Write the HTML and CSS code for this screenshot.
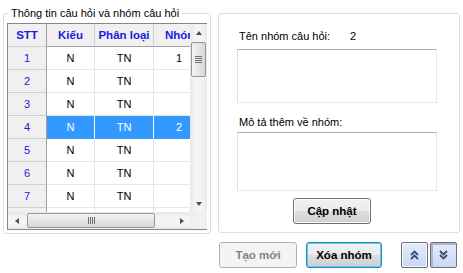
FILE: index.html
```html
<!DOCTYPE html>
<html>
    <head>
        <meta charset="utf-8">
        <link rel="stylesheet" href="styles.css">
    </head>
    <body>
        <div class="window">
            <fieldset class="group group-list">
                <legend>Thông tin câu hỏi và nhóm câu hỏi</legend>
                <div class="grid">
                    <div class="grid-view">
                        <table class="questions">
                            <tr>
                                <th class="rowhead">STT</th>
                                <th>Kiểu</th>
                                <th>Phân loại</th>
                                <th class="group-col">Nhóm</th>
                            </tr>
                            <tr>
                                <td class="rowhead">1</td><td>N</td><td>TN</td><td class="num">1</td>
                            </tr>
                            <tr>
                                <td class="rowhead">2</td><td>N</td><td>TN</td><td class="num"></td>
                            </tr>
                            <tr>
                                <td class="rowhead">3</td><td>N</td><td>TN</td><td class="num"></td>
                            </tr>
                            <tr class="selected">
                                <td class="rowhead">4</td><td>N</td><td>TN</td><td class="num">2</td>
                            </tr>
                            <tr>
                                <td class="rowhead">5</td><td>N</td><td>TN</td><td class="num"></td>
                            </tr>
                            <tr>
                                <td class="rowhead">6</td><td>N</td><td>TN</td><td class="num"></td>
                            </tr>
                            <tr>
                                <td class="rowhead">7</td><td>N</td><td>TN</td><td class="num"></td>
                            </tr>
                            <!--next row, only its top edge shows-->
                            <tr>
                                <td class="rowhead"></td><td></td><td></td><td class="num"></td>
                            </tr>
                        </table>
                    </div>
                    <!--vertical scrollbar-->
                    <div class="vscroll">
                        <div class="arrow"><span class="tri tri-up"></span></div>
                        <div class="track">
                            <div class="thumb thumb-v"><span class="grip grip-v"></span></div>
                        </div>
                        <div class="arrow"><span class="tri tri-down"></span></div>
                    </div>
                    <!--horizontal scrollbar-->
                    <div class="hscroll">
                        <div class="arrow"><span class="tri tri-left"></span></div>
                        <div class="track">
                            <div class="thumb thumb-h"><span class="grip grip-h"></span></div>
                        </div>
                        <div class="arrow"><span class="tri tri-right"></span></div>
                    </div>
                    <div class="corner"></div>
                </div>
            </fieldset>

            <fieldset class="group group-edit">
                <div class="field-label name-label">
                    <span class="label-text">Tên nhóm câu hỏi:</span>
                    <span class="label-value">2</span>
                </div>
                <div class="textbox textbox-name"></div>
                <div class="field-label desc-label">Mô tả thêm về nhóm:</div>
                <div class="textbox textbox-desc"></div>
                <button class="btn btn-update">Cập nhật</button>
            </fieldset>

            <div class="actions">
                <button class="btn btn-new" disabled>Tạo mới</button>
                <button class="btn btn-delete">Xóa nhóm</button>
                <div class="move">
                    <button class="btn-move">
                        <svg width="9" height="10" viewBox="0 0 9 10"><polyline points="1,5 4.5,1.5 8,5" /><polyline points="1,9 4.5,5.5 8,9" /></svg>
                    </button>
                    <button class="btn-move btn-move-down">
                        <svg width="9" height="10" viewBox="0 0 9 10"><polyline points="1,1 4.5,4.5 8,1" /><polyline points="1,5 4.5,8.5 8,5" /></svg>
                    </button>
                </div>
            </div>
        </div>
    </body>
</html>
```

FILE: styles.css
```css
body {
    margin: 0px;
    background-color: #ffffff;
    font-family: "Liberation Sans", Arial, sans-serif;
    font-size: 11px;
    color: #000000;
}
.window {
    display: grid;
    grid-template-columns: 208px 242px;
    column-gap: 7px;
    row-gap: 8px;
    padding: 6px 0px 0px 3px;
}
.group {
    margin: 0px;
    border: 1px solid #d5dfe5;
    border-radius: 3px;
    min-width: 0px;
    align-self: start;
}
.group-list {
    padding: 3px 3px 3px 3px;
}
.group-list legend {
    margin-left: 1px;
    padding: 0px 3px;
    line-height: 14px;
    height: 14px;
}
.group-edit {
    margin-top: 7px;
    padding: 15px 0px 8px 18px;
}

/* data grid */
.grid {
    height: 207px;
    box-sizing: border-box;
    border: 1px solid #828790;
    display: grid;
    grid-template-columns: 182px 17px;
    grid-template-rows: 188px 17px;
    background-color: #ffffff;
}
.grid-view {
    overflow: hidden;
}
table.questions {
    table-layout: fixed;
    border-collapse: separate;
    border-spacing: 0px;
    width: 206px;
}
table.questions th,
table.questions td {
    box-sizing: border-box;
    height: 23px;
    padding: 0px;
    text-align: center;
    white-space: nowrap;
    overflow: hidden;
    border-right: 1px solid #e6e6e6;
    border-bottom: 1px solid #e6e6e6;
}
table.questions th {
    background-color: #f0f0f0;
    color: #1a1ae6;
    font-size: 11.5px;
    font-weight: bold;
    border-right: 1px solid #d0d0d0;
    border-bottom: 1px solid #a0a0a0;
}
table.questions th:nth-child(1) { width: 39px; }
table.questions th:nth-child(2) { width: 48px; }
table.questions th:nth-child(3) { width: 59px; }
table.questions th:nth-child(4) { width: 60px; }
table.questions th.group-col {
    text-align: left;
    padding-left: 11px;
}
table.questions .rowhead {
    background-color: #f0f0f0;
    color: #1a1ae6;
    border-right: 1px solid #a0a0a0;
    border-bottom: 1px solid #d0d0d0;
}
table.questions td.num {
    text-align: right;
    padding-right: 31px;
}
table.questions tr.selected td {
    background-color: #3399ff;
    color: #ffffff;
    border-bottom-color: #3399ff;
    border-right-color: #ffffff;
}
table.questions tr.selected td.rowhead {
    background-color: #f0f0f0;
    color: #1a1ae6;
    border-right-color: #a0a0a0;
    border-bottom-color: #d0d0d0;
}

/* scrollbars */
.vscroll,
.hscroll {
    display: flex;
    background: linear-gradient(to right, #e8e8e8, #f4f4f4 30%, #f4f4f4 70%, #e8e8e8);
}
.vscroll {
    grid-row: 1;
    grid-column: 2;
    flex-direction: column;
}
.hscroll {
    grid-row: 2;
    grid-column: 1;
    background: linear-gradient(to bottom, #e8e8e8, #f4f4f4 30%, #f4f4f4 70%, #e8e8e8);
}
.corner {
    grid-row: 2;
    grid-column: 2;
    background-color: #f0f0f0;
}
.arrow {
    flex: 0 0 17px;
    height: 17px;
    display: flex;
    align-items: center;
    justify-content: center;
}
.track {
    flex: 1;
    position: relative;
}
.tri {
    width: 0px;
    height: 0px;
    border: 3.5px solid transparent;
}
.tri-up { border-bottom: 4px solid #4d4d4d; border-top-width: 0px; }
.tri-down { border-top: 4px solid #4d4d4d; border-bottom-width: 0px; }
.tri-left { border-right: 4px solid #4d4d4d; border-left-width: 0px; }
.tri-right { border-left: 4px solid #4d4d4d; border-right-width: 0px; }
.thumb {
    position: absolute;
    box-sizing: border-box;
    border: 1px solid #979797;
    border-radius: 2px;
    display: flex;
    align-items: center;
    justify-content: center;
}
.thumb-v {
    top: 1px;
    left: 1px;
    width: 15px;
    height: 35px;
    background: linear-gradient(to right, #f3f3f3, #e6e6e6 50%, #d6d6d6);
}
.thumb-h {
    left: 2px;
    top: 1px;
    height: 15px;
    width: 128px;
    background: linear-gradient(to bottom, #f3f3f3, #e6e6e6 50%, #d6d6d6);
}
.grip-v {
    width: 7px;
    height: 7px;
    background: repeating-linear-gradient(to bottom, #6e6e6e 0px, #6e6e6e 1px, transparent 1px, transparent 2px);
}
.grip-h {
    width: 7px;
    height: 7px;
    background: repeating-linear-gradient(to right, #6e6e6e 0px, #6e6e6e 1px, transparent 1px, transparent 2px);
}

/* edit panel */
.field-label {
    line-height: 14px;
    padding-left: 2px;
}
.name-label {
    display: flex;
}
.label-text {
    width: 111px;
}
.desc-label {
    margin-top: 12px;
}
.textbox {
    width: 200px;
    box-sizing: border-box;
    border: 1px solid #e3e9ef;
    border-top-color: #abadb3;
    border-left-color: #dbdfe6;
    background-color: #ffffff;
}
.textbox-name {
    margin-top: 6px;
    height: 54px;
}
.textbox-desc {
    margin-top: 3px;
    height: 59px;
}

/* buttons */
.btn {
    box-sizing: border-box;
    height: 26px;
    font-family: "Liberation Sans", Arial, sans-serif;
    font-size: 11.5px;
    font-weight: bold;
    color: #000000;
    border: 1px solid #707070;
    border-radius: 3px;
    padding: 0px;
    background: linear-gradient(to bottom, #f2f2f2 0%, #ebebeb 50%, #dddddd 50%, #cfcfcf 100%);
    box-shadow: inset 0px 0px 0px 1px #fcfcfc;
}
.btn-update {
    display: block;
    width: 78px;
    margin: 7px 0px 0px 56px;
}
.actions {
    grid-column: 2;
    display: flex;
    align-items: center;
    padding-left: 1px;
}
.btn-new {
    width: 78px;
    color: #838383;
    border-color: #adb2b5;
    background: #f4f4f4;
    box-shadow: none;
}
.btn-delete {
    width: 76px;
    margin-left: 9px;
    border-color: #3c7fb1;
    box-shadow: inset 0px 0px 0px 1px #48d0fc;
}
.move {
    display: flex;
    gap: 2px;
    margin-left: 19px;
}
.btn-move {
    box-sizing: border-box;
    width: 27px;
    height: 26px;
    padding: 0px;
    border: 1px solid #707070;
    border-radius: 2px;
    background: linear-gradient(to bottom, #e4ecfb, #c9d8f6);
    box-shadow: inset 0px 0px 0px 1px #f4f7fd;
    display: flex;
    align-items: center;
    justify-content: center;
}
.btn-move-down {
    box-shadow: inset 1px 1px 0px 1px #a9b5cc;
}
.btn-move svg polyline {
    fill: none;
    stroke: #3a4a72;
    stroke-width: 1.8;
}
```
